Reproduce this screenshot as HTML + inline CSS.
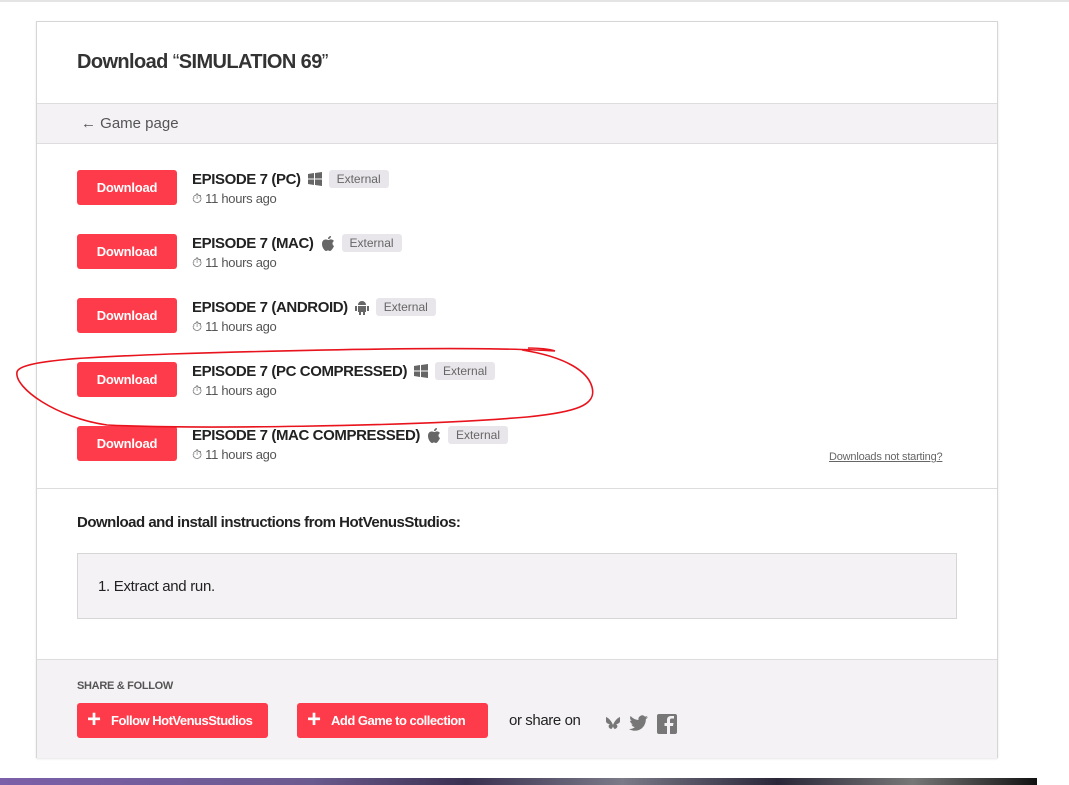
<!DOCTYPE html>
<html><head><style>
body{margin:0;width:1069px;height:785px;background:#fff;font-family:"Liberation Sans",sans-serif;position:relative;overflow:hidden;color:#222}
.top{position:absolute;left:0;top:0;width:1069px;height:2px;background:#e4e4e4}
.card{position:absolute;left:36px;top:21px;width:960px;height:735px;border:1px solid #d6d6d6;background:#fff;box-shadow:0 1px 2px rgba(0,0,0,.1)}
h1{position:absolute;left:40px;top:29px;margin:0;font-size:20px;font-weight:bold;color:#333;letter-spacing:-.6px}
h1 span{font-weight:normal}
.nav{position:absolute;left:0;top:81px;width:960px;height:39px;background:#f4f2f5;border-top:1px solid #ddd;border-bottom:1px solid #ddd;font-size:15px;color:#555;line-height:40px}
.nav div{margin-left:44px}
.btn{position:absolute;left:40px;width:100px;height:35px;background:#fe3b4a;border-radius:3px;color:#fff;font-weight:bold;font-size:13px;text-align:center;line-height:35px;letter-spacing:-.2px}
.row{position:absolute;left:155px}
.t{font-weight:bold;font-size:15px;color:#222;display:flex;align-items:center;gap:7px;height:20px;letter-spacing:-.4px;white-space:nowrap}
.ext{background:#e8e6ea;color:#666;font-size:12px;font-weight:normal;padding:2px 8px;border-radius:3px;letter-spacing:0}
.ago{font-size:13px;color:#555;margin-top:2px;letter-spacing:-.3px}
.sep{position:absolute;left:0;top:466px;width:960px;height:1px;background:#ddd}
.instr{position:absolute;left:40px;top:492px;font-size:15px;font-weight:bold;color:#222;letter-spacing:-.5px}
.box{position:absolute;left:40px;top:531px;width:878px;height:64px;background:#f4f2f5;border:1px solid #d6d6d6;font-size:15px;line-height:66px;color:#222;letter-spacing:-.3px}
.foot{position:absolute;left:0;top:637px;width:960px;height:98px;background:#f4f2f5;border-top:1px solid #ddd}
.sf{position:absolute;left:40px;top:20px;font-size:11px;font-weight:bold;color:#555;letter-spacing:-.3px}
.fb{position:absolute;top:43px;height:35px;background:#fe3b4a;border-radius:3px;color:#fff;font-weight:bold;font-size:13px;line-height:35px;padding-left:34px;white-space:nowrap;letter-spacing:-.5px;box-sizing:border-box}
.fb:before{content:"+";position:absolute;left:10px;font-size:24px;top:-1px}
.strip{position:absolute;left:0;top:778px;width:1037px;height:7px;background:linear-gradient(90deg,#7b5fa8,#6b5a8e 30%,#3a3050 45%,#7a7a88 60%,#2a2638 75%,#777 88%,#111)}
</style></head><body>
<div class="top"></div>
<div class="card">
<h1>Download <span>“</span>SIMULATION 69<span>”</span></h1>
<div class="nav"><div>← Game page</div></div>

<div class="btn" style="top:148px">Download</div>
<div class="row" style="top:147px"><div class="t">EPISODE 7 (PC) <svg width="14" height="14" viewBox="0 0 14 14" fill="#666"><path d="M0 2l6-1v5.5H0zM7 1l7-1v6.5H7zM0 7.5h6V13l-6-1zM7 7.5h7V14l-7-1z"/></svg><span class="ext">External</span></div><div class="ago">⏱ 11 hours ago</div></div>

<div class="btn" style="top:212px">Download</div>
<div class="row" style="top:211px"><div class="t">EPISODE 7 (MAC) <svg width="14" height="15" viewBox="0 0 14 15" fill="#666"><path d="M7 4C5 3 1 3 1 8c0 4 3 7 4 7s1.5-.6 2-.6 1 .6 2 .6 3-2.5 4-5c-2-1-2-4 0-5-1-1.5-3-2-4-1.5-1 .4-1 .5-2 .5zM7 3c0-1.5 1-3 3-3 0 2-1.5 3-3 3z"/></svg><span class="ext">External</span></div><div class="ago">⏱ 11 hours ago</div></div>

<div class="btn" style="top:276px">Download</div>
<div class="row" style="top:275px"><div class="t">EPISODE 7 (ANDROID) <svg width="14" height="15" viewBox="0 0 14 15" fill="#666"><path d="M3 5a4 4 0 018 0zM3 6h8v6H3zM0 6h2v5H0zM12 6h2v5h-2zM4 12h2v3H4zM8 12h2v3H8z"/></svg><span class="ext">External</span></div><div class="ago">⏱ 11 hours ago</div></div>

<div class="btn" style="top:340px">Download</div>
<div class="row" style="top:339px"><div class="t">EPISODE 7 (PC COMPRESSED) <svg width="14" height="14" viewBox="0 0 14 14" fill="#666"><path d="M0 2l6-1v5.5H0zM7 1l7-1v6.5H7zM0 7.5h6V13l-6-1zM7 7.5h7V14l-7-1z"/></svg><span class="ext">External</span></div><div class="ago">⏱ 11 hours ago</div></div>

<div class="btn" style="top:404px">Download</div>
<div class="row" style="top:403px"><div class="t">EPISODE 7 (MAC COMPRESSED) <svg width="14" height="15" viewBox="0 0 14 15" fill="#666"><path d="M7 4C5 3 1 3 1 8c0 4 3 7 4 7s1.5-.6 2-.6 1 .6 2 .6 3-2.5 4-5c-2-1-2-4 0-5-1-1.5-3-2-4-1.5-1 .4-1 .5-2 .5zM7 3c0-1.5 1-3 3-3 0 2-1.5 3-3 3z"/></svg><span class="ext">External</span></div><div class="ago">⏱ 11 hours ago</div></div>

<div style="position:absolute;left:792px;top:429px;font-size:11px;color:#666;text-decoration:underline;letter-spacing:-.2px">Downloads not starting?</div>
<div class="sep"></div>
<div class="instr">Download and install instructions from HotVenusStudios:</div>
<div class="box"><span style="margin-left:20px">1. Extract and run.</span></div>
<div class="foot">
<div class="sf">SHARE &amp; FOLLOW</div>
<div class="fb" style="left:40px;width:191px">Follow HotVenusStudios</div>
<div class="fb" style="left:260px;width:191px">Add Game to collection</div>
<div style="position:absolute;left:472px;top:52px;font-size:15px;color:#222;letter-spacing:-.4px">or share on</div>
<svg style="position:absolute;left:568px;top:52px" width="80" height="22" viewBox="0 0 80 22" fill="#777">
<path d="M1 5c3 1 6 5 7 8 1-3 4-7 7-8v4c0 2-2 3-4 3 2 1 2 4-1 5-1 0-2-2-2-3 0 1-1 3-2 3-3-1-3-4-1-5-2 0-4-1-4-3z"/>
<path d="M43 5c-1 .5-1.5.6-2.3.7.8-.5 1.4-1.2 1.7-2-.8.4-1.6.8-2.4.9a3.8 3.8 0 00-6.5 3.4c-3.2-.2-6-1.7-7.9-4-1 1.8-.4 4 1.2 5-.6 0-1.2-.2-1.7-.5 0 1.9 1.300 3.400 3 3.800-.6.100-1.100.200-1.700.100.500 1.500 1.900 2.600 3.500 2.600A7.700 7.700 0 0124 17c1.700 1.100 3.700 1.700 5.800 1.700 7 0 11-5.800 11-11v-.5c.8-.6 1.500-1.300 2.200-2.200z"/>
<path d="M54 2h16a2 2 0 012 2v16a2 2 0 01-2 2h-5v-8h3l.5-3H65V8c0-1 .5-1.500 1.500-1.500H69V4h-3c-3 0-4 2-4 4v3h-2.500v3H62v8h-8a2 2 0 01-2-2V4a2 2 0 012-2z"/>
</svg>
</div>
</div>
<svg style="position:absolute;left:0;top:0" width="1069" height="785"><path d="M528 348c10 0 22 1 27 3M555 351C480 346 300 350 170 354 90 357 20 360 17 372c-3 16 40 46 90 53 80 4 300 2 420-8 50-5 70-12 65-30-4-15-25-30-70-37" fill="none" stroke="#e8131c" stroke-width="1.6"/></svg>
<div class="strip"></div>
</body></html>
